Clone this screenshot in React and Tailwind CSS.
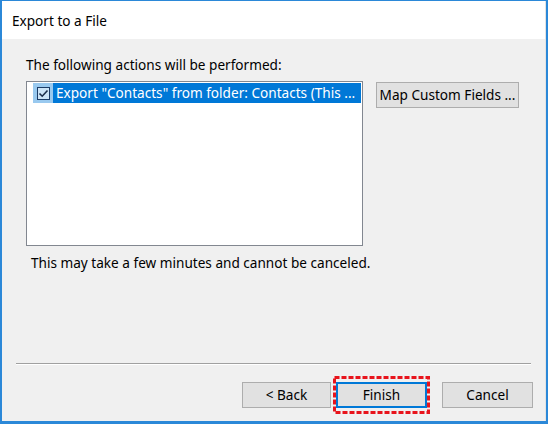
import React from 'react';

const font = { fontFamily: '"Noto Sans", "Open Sans", sans-serif' };

const WinButton = ({ children, primary, className = '' }) => (
  <button
    className={`h-[26px] bg-[#e1e1e1] text-[13.6px] text-black ${
      primary ? 'border-2 border-[#0078d7]' : 'border border-[#adadad]'
    } ${className}`}
  >
    {children}
  </button>
);

const CheckIcon = () => (
  <span className="flex h-[13px] w-[13px] items-center justify-center border border-[#1b3b66] bg-[#cce4f7]">
    <svg width="11" height="11" viewBox="0 0 11 11">
      <path d="M1.5 5.5 L4.2 8.2 L9.5 2.5" fill="none" stroke="#1b2d4a" strokeWidth="1.6" />
    </svg>
  </span>
);

const App = () => {
  return (
    <div
      className="flex h-[424px] w-[548px] flex-col border-t border-l-2 border-r-2 border-b-[3px] border-[#2b88d8] bg-[#f0f0f0] text-[13.6px] text-black"
      style={font}
    >
      {/* title bar */}
      <div className="flex h-[38px] items-center border-r border-[#e3e3e3] bg-white pl-[10px] pt-[2px]">
        Export to a File
      </div>

      <div className="flex flex-1 flex-col border-r border-[#e3e3e3]">
        <div className="pl-[24px] pt-[17px] leading-[18px]">The following actions will be performed:</div>

        <div className="flex items-start pl-[24px] pt-[7px]">
          <div className="h-[165px] w-[337px] border border-[#828790] bg-white pt-[1px] pl-[6px] pr-[1px]">
            <div className="flex h-[20px] items-center">
              <div className="flex h-full w-[20px] items-center justify-center bg-[#99c9ef]">
                <CheckIcon />
              </div>
              <div className="flex h-full flex-1 items-center bg-[#0078d7] pl-[3px] text-white whitespace-nowrap">
                Export "Contacts" from folder: Contacts (This ...
              </div>
            </div>
          </div>
          <WinButton className="ml-[13px] mt-[1px] w-[143px]">Map Custom Fields ...</WinButton>
        </div>

        <div className="pl-[29px] pt-[8px] leading-[18px]">This may take a few minutes and cannot be canceled.</div>

        <div className="flex-1" />

        <div className="mx-[14px] h-[2px] border-t border-[#a0a0a0] bg-white" />

        <div className="flex items-center justify-end pr-[12px] pt-[17px] pb-[13px]">
          <WinButton className="w-[89px]">&lt; Back</WinButton>
          <div className="relative ml-[5px]">
            <WinButton primary className="w-[91px]">Finish</WinButton>
            <svg className="pointer-events-none absolute -left-[3px] -top-[6px]" width="97" height="38">
              <rect x="1.5" y="1.5" width="94" height="35" fill="none" stroke="#e8141c" strokeWidth="3" strokeDasharray="5 2" />
            </svg>
          </div>
          <WinButton className="ml-[15px] w-[91px]">Cancel</WinButton>
        </div>
      </div>
    </div>
  );
};

export default App;
